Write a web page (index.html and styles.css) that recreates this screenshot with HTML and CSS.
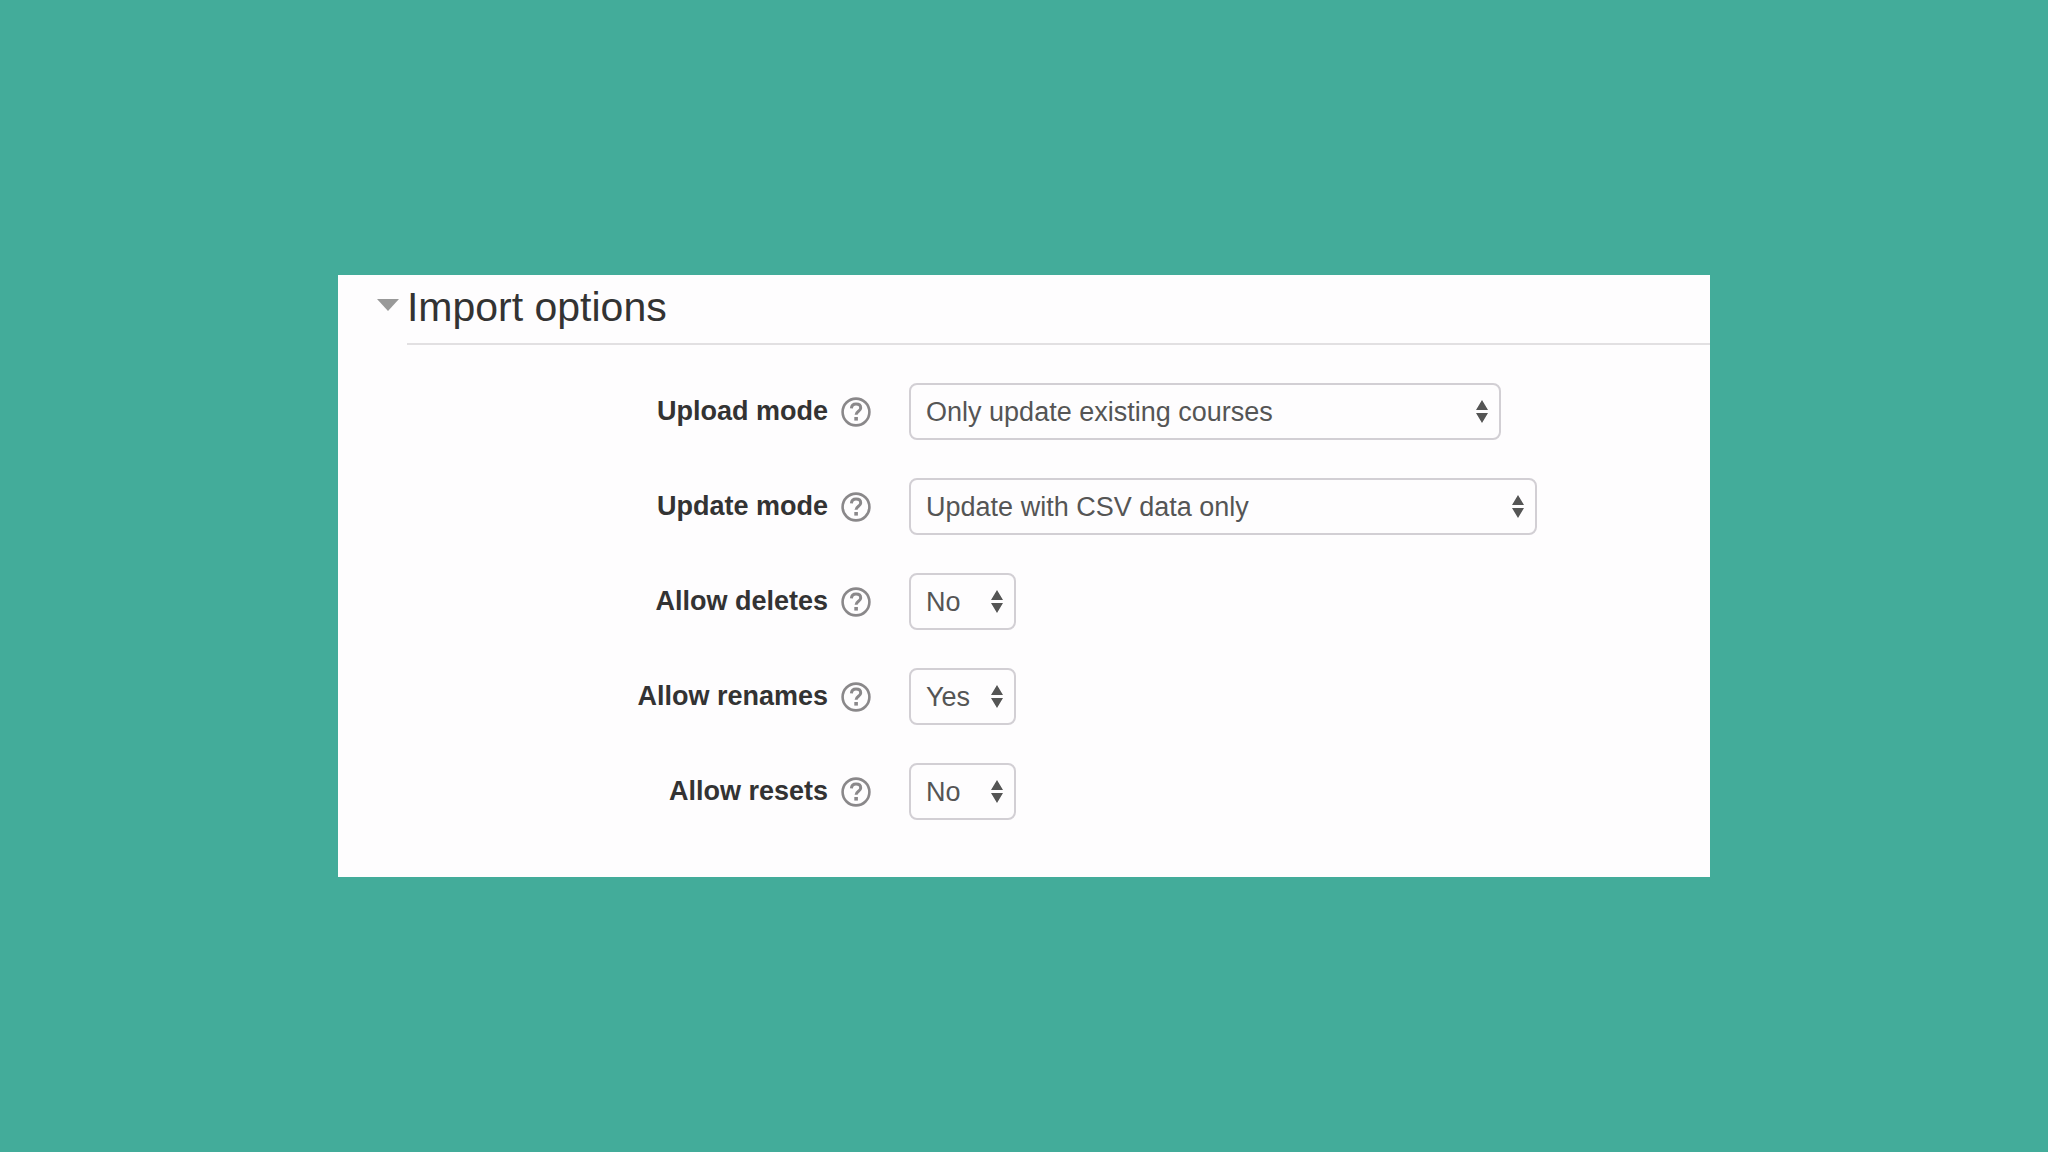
FILE: index.html
```
<!DOCTYPE html>
<html lang="en">
<head>
    <meta charset="UTF-8">
    <meta name="viewport" content="width=device-width, initial-scale=1.0">
    <title>Import options</title>
    <link rel="stylesheet" href="styles.css">
</head>
<body>
    <svg class="sprite" aria-hidden="true">
        <symbol id="help" viewBox="0 0 30 30">
            <circle cx="15" cy="15" r="13.4" fill="none" stroke="currentColor" stroke-width="2.6"/>
            <path d="M10.4 11.4C10.6 8.400 12.400 7 15 7c2.800 0 4.700 1.500 4.700 3.900 0 3.400-4.600 3.200-4.600 6.900" fill="none" stroke="currentColor" stroke-width="3"/>
            <rect x="13.300" y="20" width="3.600" height="3.600" fill="currentColor"/>
        </symbol>
    </svg>

    <form class="panel">
        <h2 class="header">
            <button type="button" class="toggle" aria-expanded="true">
                <svg class="arrow" viewBox="0 0 22 12" aria-hidden="true"><path d="M0 0h22L11 12z" fill="currentColor"/></svg>
                <span class="title">Import options</span>
            </button>
        </h2>

        <div class="fields">
            <div class="row">
                <div class="row-label">
                    <label for="mode">Upload mode</label>
                    <button type="button" class="help" aria-label="Help with Upload mode"><svg><use href="#help"/></svg></button>
                </div>
                <select id="mode" name="mode" class="select-mode">
                    <option>Only update existing courses</option>
                </select>
            </div>

            <div class="row">
                <div class="row-label">
                    <label for="updatemode">Update mode</label>
                    <button type="button" class="help" aria-label="Help with Update mode"><svg><use href="#help"/></svg></button>
                </div>
                <select id="updatemode" name="updatemode" class="select-update">
                    <option>Update with CSV data only</option>
                </select>
            </div>

            <div class="row">
                <div class="row-label">
                    <label for="deletes">Allow deletes</label>
                    <button type="button" class="help" aria-label="Help with Allow deletes"><svg><use href="#help"/></svg></button>
                </div>
                <select id="deletes" name="deletes" class="select-short">
                    <option selected>No</option>
                    <option>Yes</option>
                </select>
            </div>

            <div class="row">
                <div class="row-label">
                    <label for="renames">Allow renames</label>
                    <button type="button" class="help" aria-label="Help with Allow renames"><svg><use href="#help"/></svg></button>
                </div>
                <select id="renames" name="renames" class="select-short">
                    <option>No</option>
                    <option selected>Yes</option>
                </select>
            </div>

            <div class="row">
                <div class="row-label">
                    <label for="resets">Allow resets</label>
                    <button type="button" class="help" aria-label="Help with Allow resets"><svg><use href="#help"/></svg></button>
                </div>
                <select id="resets" name="resets" class="select-short">
                    <option selected>No</option>
                    <option>Yes</option>
                </select>
            </div>
        </div>
    </form>
</body>
</html>
```

FILE: styles.css
```
* {
    box-sizing: border-box;
}
body {
    display: flex;
    align-items: center;
    justify-content: center;
    min-height: 100vh;
    margin: 0;
    background: #43ac9a;
    color: #333;
    font-family: "Liberation Sans", Arial, sans-serif;
    font-size: 27px;
}
.sprite {
    display: none;
}
.panel {
    width: 67%;
    background: #fefdfe;
}
.header {
    margin: 0;
}
.toggle {
    display: flex;
    align-items: flex-start;
    gap: 8px;
    width: 100%;
    padding: 0 0 0 39px;
    border: none;
    background: none;
    color: #333;
    font: 41px/48px "Liberation Sans", Arial, sans-serif;
    text-align: left;
    cursor: pointer;
}
.arrow {
    width: 22px;
    height: 12px;
    margin-top: 24px;
    color: #999;
}
.title {
    flex: 1;
    padding: 8px 0 12px;
    border-bottom: 2px solid #e2e0e2;
}
.fields {
    display: flex;
    flex-direction: column;
    gap: 38px;
    padding: 38px 0 57px;
}
.row {
    display: grid;
    grid-template-columns: 39% 1fr;
    align-items: center;
    column-gap: 36px;
}
.row-label {
    display: flex;
    align-items: center;
    justify-content: flex-end;
    gap: 13px;
    padding-right: 2px;
    font-weight: bold;
}
.help {
    width: 30px;
    height: 30px;
    padding: 0;
    border: none;
    background: none;
    color: #8a888a;
    cursor: pointer;
}
.help svg {
    display: block;
    width: 30px;
    height: 30px;
}
select {
    appearance: none;
    height: 57px;
    max-width: 100%;
    padding: 0 36px 0 15px;
    border: 2px solid #d2cfd4;
    border-radius: 8px;
    background: #fefdfe url("data:image/svg+xml,%3Csvg xmlns='http://www.w3.org/2000/svg' width='12' height='23'%3E%3Cpath d='M0 10L6 0l6 10zM0 13h12L6 23z' fill='%23555'/%3E%3C/svg%3E") no-repeat right 11px center;
    color: #555;
    font: 27px "Liberation Sans", Arial, sans-serif;
}
.select-mode {
    width: 592px;
}
.select-update {
    width: 628px;
}
.select-short {
    width: 107px;
}
```
